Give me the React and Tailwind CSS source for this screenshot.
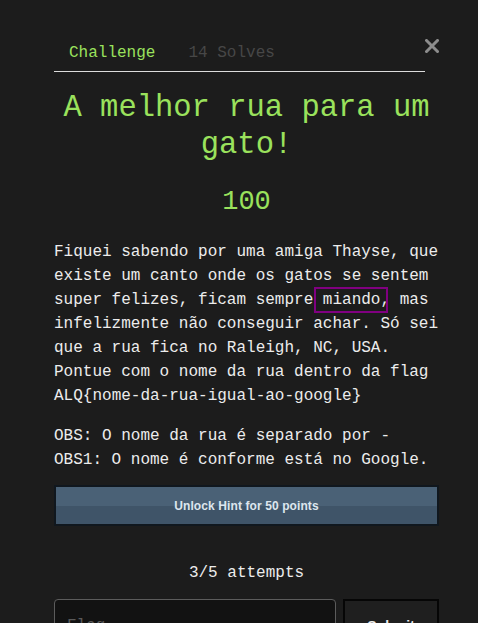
export default function App() {
  const mono = "font-['Liberation_Mono','DejaVu_Sans_Mono',monospace]";

  return (
    <div className={`min-h-screen w-full bg-[#1c1c1c] ${mono} overflow-hidden`}>
      <div className="ml-[54px] w-[385px] pt-[41px]">
        {/* Header tabs */}
        <div className="flex items-start">
          <div className="flex flex-1 border-b border-[#dcdcdc]">
            <span className="px-[15px] pb-[6px] text-base leading-6 text-[#9ae25c]">
              Challenge
            </span>
            <span className="ml-[3px] px-[15px] pb-[6px] text-base leading-6 text-[#474747]">
              14 Solves
            </span>
          </div>
          <button className="-mt-[2px] flex h-[14px] w-[14px] items-center justify-center">
            <svg width="14" height="14" viewBox="0 0 14 14">
              <path
                d="M1.5 1.5 L12.5 12.5 M12.5 1.5 L1.5 12.5"
                stroke="#8c8c8c"
                strokeWidth="3"
                strokeLinecap="square"
              />
            </svg>
          </button>
        </div>

        {/* Title */}
        <h1 className="mt-[18px] text-center text-[30.5px] leading-[37px] text-[#9ae25c]">
          A melhor rua para um gato!
        </h1>
        <div className="mt-[20px] text-center text-[27px] leading-[36px] text-[#9ae25c]">
          100
        </div>

        {/* Description */}
        <div className="mt-[20px] text-base leading-6 text-[#ececec]">
          <p>
            Fiquei sabendo por uma amiga Thayse, que existe um canto onde os
            gatos se sentem super felizes, ficam sempre
            <span className="relative inline-block">
              &nbsp;miando,
              <span className="absolute left-[1px] top-[-1px] h-[26px] w-[74px] border-2 border-[#800080]" />
            </span>{" "}
            mas infelizmente não conseguir achar. Só sei que a rua fica no
            Raleigh, NC, USA. Pontue com o nome da rua dentro da flag
            ALQ{"{"}nome-da-rua-igual-ao-google{"}"}
          </p>
          <p className="mt-4">
            OBS: O nome da rua é separado por -
            <br />
            OBS1: O nome é conforme está no Google.
          </p>
        </div>

        {/* Hint */}
        <button className="mt-[13px] block h-[41px] w-full border-2 border-[#10171e] bg-[linear-gradient(to_bottom,#4a6176_0%,#4a6176_50%,#3f5468_50%,#3f5468_100%)] font-['Liberation_Sans',Arial,sans-serif] text-[12px] font-bold tracking-[0.1px] text-[#dde6ee]">
          Unlock Hint for 50 points
        </button>

        {/* Attempts */}
        <div className="mt-[35px] text-center text-base leading-6 text-[#ececec]">
          3/5 attempts
        </div>

        {/* Submit row */}
        <div className="mt-[14px] flex gap-[7px]">
          <input
            placeholder="Flag"
            className={`h-[54px] w-[282px] rounded-[4px] border border-[#5c5c5c] bg-[#121212] px-[12px] text-base text-[#ececec] placeholder-[#5a5a5a] outline-none ${mono}`}
          />
          <button className="h-[54px] flex-1 border-2 border-[#060606] bg-[#1f1f1f] font-['Liberation_Sans',Arial,sans-serif] text-[14px] font-bold text-[#ececec]">
            Submit
          </button>
        </div>
      </div>
    </div>
  );
}
